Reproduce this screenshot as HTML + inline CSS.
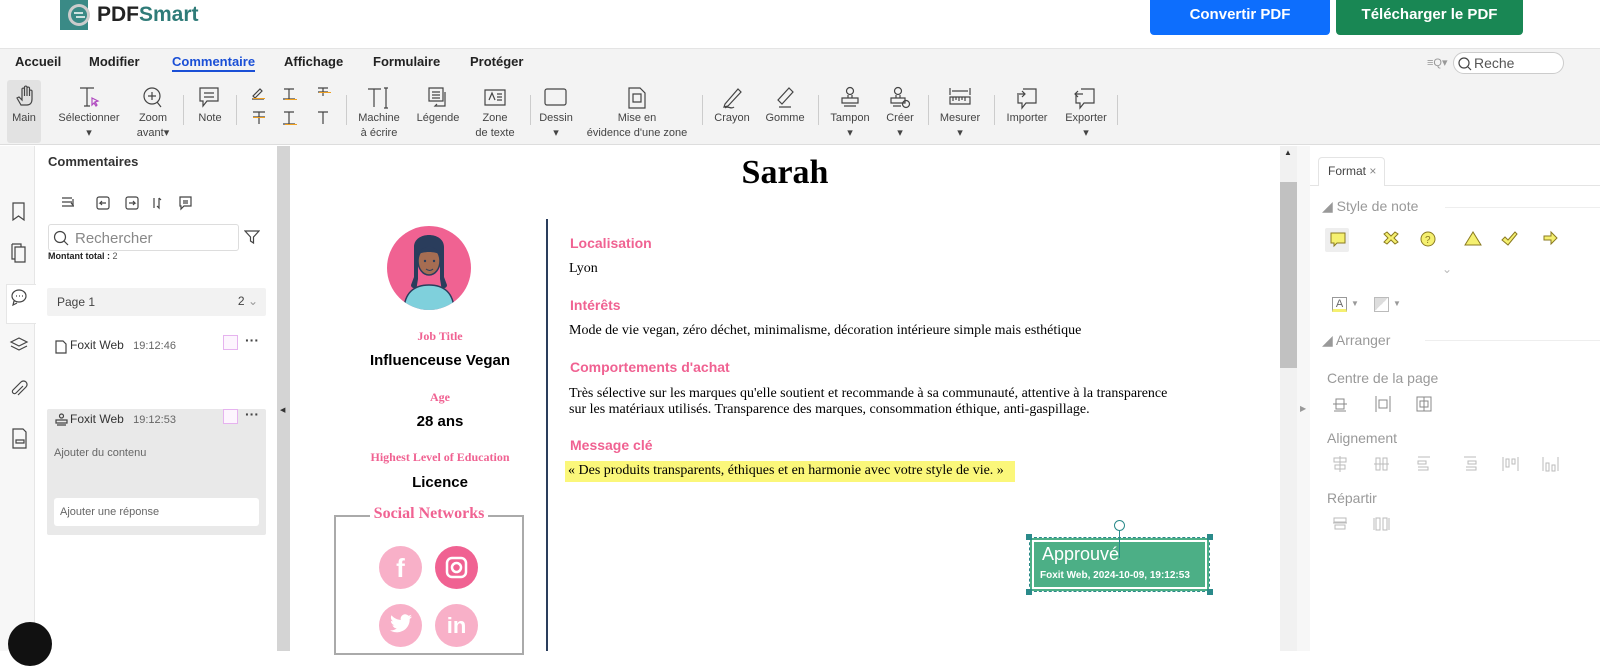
<!DOCTYPE html>
<html><head><meta charset="utf-8"><style>
*{margin:0;padding:0;box-sizing:border-box}
body{width:1600px;height:651px;overflow:hidden;background:#fff;font-family:"Liberation Sans",sans-serif;position:relative;color:#222}
.a{position:absolute}
.tb{font-size:11px;color:#444;text-align:center;line-height:15px}
.ic{position:absolute;stroke:#444;fill:none;stroke-width:1.2}
.ser{font-family:"Liberation Serif",serif}
.pk{color:#f06292;font-weight:bold;font-family:"Liberation Serif",serif}
.rp{color:#999;font-size:14px}
</style></head><body>
<!-- header -->
<svg class="a" style="left:58px;top:0" width="36" height="30"><path d="M2 0h28v30H2z" fill="#3a8a86"/><circle cx="21" cy="15" r="11" fill="#ccc"/><circle cx="21" cy="15" r="8" fill="#3a8a86"/><path d="M16 13h9M18 17h9" stroke="#fff" stroke-width="1.5"/></svg>
<div class="a" style="left:97px;top:3px;font-size:21px;font-weight:bold;color:#222">PDF<span style="color:#2f7b78">Smart</span></div>
<div class="a" style="left:1150px;top:0;width:180px;height:35px;background:#0d6efd;border-radius:0 0 4px 4px;color:#fff;font-weight:bold;font-size:15px;text-align:center;line-height:30px">Convertir PDF</div>
<div class="a" style="left:1336px;top:0;width:187px;height:35px;background:#198754;border-radius:0 0 4px 4px;color:#fff;font-weight:bold;font-size:15px;text-align:center;line-height:30px">Télécharger le PDF</div>
<!-- menubar -->
<div class="a" style="left:0;top:48px;width:1600px;height:97px;background:#f3f3f3;border-top:1px solid #e4e4e4;border-bottom:1px solid #ddd"></div>
<div class="a" style="top:54px;left:15px;font-size:13px;font-weight:bold;color:#222">Accueil</div>
<div class="a" style="top:54px;left:89px;font-size:13px;font-weight:bold">Modifier</div>
<div class="a" style="top:54px;left:172px;font-size:13px;font-weight:bold;color:#1a4fd6;border-bottom:2px solid #1a4fd6;padding-bottom:1px">Commentaire</div>
<div class="a" style="top:54px;left:284px;font-size:13px;font-weight:bold">Affichage</div>
<div class="a" style="top:54px;left:373px;font-size:13px;font-weight:bold">Formulaire</div>
<div class="a" style="top:54px;left:470px;font-size:13px;font-weight:bold">Protéger</div>
<div class="a" style="left:1427px;top:56px;font-size:11px;color:#999">≡Q▾</div>
<div class="a" style="left:1453px;top:52px;width:111px;height:22px;border:1px solid #ccc;border-radius:11px;background:#fff;font-size:14px;color:#555;padding:2px 0 0 20px">Reche</div>
<svg class="ic" style="left:1457px;top:56px" width="16" height="16"><circle cx="7" cy="7" r="5"/><path d="M11 11l3 3"/></svg>
<!-- toolbar -->
<div class="a" style="left:7px;top:80px;width:34px;height:63px;background:#e2e2e2;border-radius:3px"></div>
<svg class="ic" style="left:15px;top:85px" width="22" height="22"><path d="M6 20l-4-7 2-1 3 3V4a1.3 1.3 0 012.5 0v7V2a1.3 1.3 0 012.5 0v9V3a1.3 1.3 0 012.5 0v8V6a1.3 1.3 0 012.5 0v8c0 4-2 6-5 6z"/></svg>
<div class="a tb" style="left:7px;top:111px;width:34px">Main</div>
<svg class="ic" style="left:78px;top:86px" width="24" height="24"><path d="M2 2h14M9 2v18M6 20h6"/><path d="M14 12l6 3-3 1 2 3-1 1-2-3-2 2z" stroke="#b04ac0"/></svg>
<div class="a tb" style="left:52px;top:111px;width:74px">Sélectionner<br>▾</div>
<svg class="ic" style="left:141px;top:86px" width="24" height="24"><circle cx="11" cy="10" r="8"/><path d="M7 10h8M11 6v8M16 16l4 5"/></svg>
<div class="a tb" style="left:130px;top:111px;width:46px">Zoom<br>avant▾</div>
<div class="a" style="left:183px;top:95px;width:1px;height:30px;background:#ccc"></div>
<svg class="ic" style="left:198px;top:86px" width="24" height="24"><path d="M2 2h18v13H9l-4 5v-5H2z M6 7h10M6 11h10"/></svg>
<div class="a tb" style="left:190px;top:111px;width:40px">Note</div>
<div class="a" style="left:236px;top:95px;width:1px;height:30px;background:#ccc"></div>
<svg class="ic" style="left:250px;top:86px" width="90" height="48"><path d="M3 10l7-7 2 2-7 7zM2 13h12" /><path d="M34 3h10M39 3v10M33 13h12"/><path d="M68 2h10M73 2v8M68 6h10" /><path d="M3 31h12M9 26v12M3 26h12"/><path d="M34 26h10M39 26v12M33 38h12"/><path d="M68 26h10M73 26v12"/></svg>
<div class="a" style="left:253px;top:98px;width:12px;height:1px;background:#f0a020"></div>
<div class="a" style="left:285px;top:99px;width:12px;height:1px;background:#f0a020"></div>
<div class="a" style="left:319px;top:92px;width:12px;height:1px;background:#f0a020"></div>
<div class="a" style="left:253px;top:117px;width:12px;height:1px;background:#f0a020"></div>
<div class="a" style="left:285px;top:124px;width:12px;height:1px;background:#f0a020"></div>
<div class="a" style="left:346px;top:95px;width:1px;height:30px;background:#ccc"></div>
<svg class="ic" style="left:366px;top:86px" width="26" height="24"><path d="M2 3h13M8 3v18M20 2v20M18 2h4M18 22h4"/></svg>
<div class="a tb" style="left:352px;top:111px;width:54px">Machine<br>à écrire</div>
<svg class="ic" style="left:426px;top:86px" width="24" height="24"><path d="M3 2h14v13H3z M6 6h8M6 9h8M6 12h8M19 6v14h-10l2-2"/></svg>
<div class="a tb" style="left:412px;top:111px;width:52px">Légende</div>
<svg class="ic" style="left:483px;top:88px" width="24" height="20"><path d="M2 2h20v15H2z M6 12l3-7 3 7M14 6h5M14 9h5M14 12h5"/></svg>
<div class="a tb" style="left:470px;top:111px;width:50px">Zone<br>de texte</div>
<div class="a" style="left:530px;top:95px;width:1px;height:30px;background:#ccc"></div>
<svg class="ic" style="left:543px;top:87px" width="26" height="22"><rect x="2" y="2" width="21" height="16" rx="2"/></svg>
<div class="a tb" style="left:533px;top:111px;width:46px">Dessin<br>▾</div>
<svg class="ic" style="left:627px;top:86px" width="20" height="24"><path d="M2 2h11l5 5v15H2z M6 8h8v8H6z" /></svg>
<div class="a tb" style="left:585px;top:111px;width:104px">Mise en<br>évidence d'une zone</div>
<div class="a" style="left:702px;top:95px;width:1px;height:30px;background:#ccc"></div>
<svg class="ic" style="left:721px;top:86px" width="24" height="24"><path d="M4 18L17 3l3 3L7 20l-4 1zM4 22c3-3 6 2 9-1"/></svg>
<div class="a tb" style="left:708px;top:111px;width:48px">Crayon</div>
<svg class="ic" style="left:774px;top:86px" width="24" height="24"><path d="M8 18l11-12-4-4-11 12 4 4zM5 21h12"/></svg>
<div class="a tb" style="left:760px;top:111px;width:50px">Gomme</div>
<div class="a" style="left:818px;top:95px;width:1px;height:30px;background:#ccc"></div>
<svg class="ic" style="left:838px;top:86px" width="24" height="24"><circle cx="12" cy="5" r="3.5"/><path d="M10 9v3M14 9v3M4 12h16v5H4zM6 20h12"/></svg>
<div class="a tb" style="left:824px;top:111px;width:52px">Tampon<br>▾</div>
<svg class="ic" style="left:888px;top:86px" width="24" height="24"><circle cx="10" cy="5" r="3.5"/><path d="M8 9v3M12 9v3M3 12h14v5H3zM5 20h8"/><circle cx="18" cy="18" r="3.5"/></svg>
<div class="a tb" style="left:878px;top:111px;width:44px">Créer<br>▾</div>
<div class="a" style="left:928px;top:95px;width:1px;height:30px;background:#ccc"></div>
<svg class="ic" style="left:948px;top:86px" width="24" height="24"><path d="M2 2v7M22 2v7M4 5h16M2 11h20v7H2zM5 11v4M8 11v3M11 11v4M14 11v3M17 11v4"/></svg>
<div class="a tb" style="left:932px;top:111px;width:56px">Mesurer<br>▾</div>
<div class="a" style="left:994px;top:95px;width:1px;height:30px;background:#ccc"></div>
<svg class="ic" style="left:1015px;top:86px" width="24" height="24"><path d="M8 3h13v14H11l-4 5v-5H3V9M2 8h8M7 5l3 3-3 3"/></svg>
<div class="a tb" style="left:1000px;top:111px;width:54px">Importer</div>
<svg class="ic" style="left:1073px;top:86px" width="24" height="24"><path d="M8 3h13v14H11l-4 5v-5H3V9M10 8H2M5 5L2 8l3 3"/></svg>
<div class="a tb" style="left:1058px;top:111px;width:56px">Exporter<br>▾</div>
<div class="a" style="left:1117px;top:95px;width:1px;height:30px;background:#ccc"></div>
<!-- left strip -->
<div class="a" style="left:0;top:146px;width:35px;height:505px;background:#f7f7f7;border-right:1px solid #e6e6e6"></div>
<div class="a" style="left:6px;top:284px;width:30px;height:40px;background:#fff;border:1px solid #e6e6e6;border-right:none"></div>
<svg class="ic" style="left:9px;top:200px" width="20" height="250"><path d="M4 3h11v17l-5.5-4L4 20z"/><path d="M6 47h10v15H6zM3 44h9v3M3 44v15h3"/><path d="M3 96a7 6 0 1114 0 7 6 0 01-14 0zM7 96h1M10 96h1M13 96h1M5 101l-1 4 4-2"/><path d="M10 138l8 4-8 4-8-4zM2 146l8 4 8-4"/><path d="M14 186l-7 7a2 2 0 01-3-3l8-8a3.5 3.5 0 015 5l-8 8"/><path d="M4 229h10l3 3v16H4zM7 240h8v3H7z"/></svg>
<div class="a" style="left:8px;top:622px;width:44px;height:44px;border-radius:50%;background:#111"></div>
<!-- comments panel -->
<div class="a" style="left:48px;top:154px;font-size:13px;font-weight:bold;color:#333">Commentaires</div>
<svg class="ic" style="left:60px;top:195px" width="135" height="16" stroke-width="1"><path d="M2 3h10M2 7h10M2 11h12M13 4v6l-2-2"/><rect x="37" y="2" width="12" height="12" rx="2"/><path d="M46 8h-6l2-2M40 8l2 2"/><rect x="66" y="2" width="12" height="12" rx="2"/><path d="M69 8h6l-2-2M75 8l-2 2"/><path d="M94 3v10M99 3v10l-2-2M99 3l2 2"/><path d="M120 2h11v9h-7l-3 3v-3h-1zM123 6h5M123 8h5"/></svg>
<div class="a" style="left:48px;top:224px;width:191px;height:27px;border:1px solid #ddd;border-radius:3px;font-size:15px;color:#888;padding:5px 0 0 26px">Rechercher</div>
<svg class="ic" style="left:53px;top:230px" width="16" height="16"><circle cx="7" cy="7" r="5.5"/><path d="M11 11l4 4"/></svg>
<svg class="ic" style="left:244px;top:229px" width="16" height="16"><path d="M1 2h14l-5.5 6v6l-3-2V8z"/></svg>
<div class="a" style="left:48px;top:251px;font-size:9px;font-weight:bold;color:#222">Montant total : <span style="font-weight:normal;color:#555">2</span></div>
<div class="a" style="left:47px;top:288px;width:219px;height:28px;background:#f2f2f2;border-radius:2px;font-size:12px;color:#444;padding:7px 0 0 10px">Page 1<span style="position:absolute;right:8px;top:6px">2 <span style="color:#999">⌄</span></span></div>
<svg class="ic" style="left:55px;top:340px" width="12" height="14" stroke-width="1"><path d="M1 1h7l3 3v9H1z"/></svg>
<div class="a" style="left:70px;top:338px;font-size:12px;color:#333">Foxit Web <span style="color:#666;font-size:11px;margin-left:6px">19:12:46</span></div>
<div class="a" style="left:223px;top:335px;width:15px;height:15px;border:1px solid #e6b3ef;background:#fdf5fe"></div>
<div class="a" style="left:245px;top:332px;font-size:14px;color:#444;font-weight:bold">···</div>
<div class="a" style="left:47px;top:409px;width:219px;height:126px;background:#e9e9e9;border-radius:2px"></div>
<svg class="ic" style="left:55px;top:413px" width="13" height="14" stroke-width="1"><circle cx="6.5" cy="3" r="2"/><path d="M1 7h11v3H1zM2 12h9"/></svg>
<div class="a" style="left:70px;top:412px;font-size:12px;color:#333">Foxit Web <span style="color:#666;font-size:11px;margin-left:6px">19:12:53</span></div>
<div class="a" style="left:223px;top:409px;width:15px;height:15px;border:1px solid #e6b3ef;background:#fdf5fe"></div>
<div class="a" style="left:245px;top:406px;font-size:14px;color:#444;font-weight:bold">···</div>
<div class="a" style="left:54px;top:447px;font-size:11px;color:#666">Ajouter du contenu</div>
<div class="a" style="left:54px;top:498px;width:205px;height:28px;background:#fff;border-radius:3px;font-size:11px;color:#666;padding:8px 0 0 6px">Ajouter une réponse</div>
<!-- gutters -->
<div class="a" style="left:277px;top:146px;width:13px;height:505px;background:#d4d4d4"></div>
<div class="a" style="left:280px;top:406px;font-size:7px;color:#333">◀</div>
<div class="a" style="left:1280px;top:146px;width:17px;height:505px;background:#f1f1f1"></div>
<div class="a" style="left:1280px;top:182px;width:17px;height:186px;background:#c1c1c1"></div>
<div class="a" style="left:1284px;top:148px;font-size:8px;color:#333">▲</div>
<div class="a" style="left:1297px;top:146px;width:13px;height:505px;background:#f7f7f7"></div>
<div class="a" style="left:1300px;top:404px;font-size:8px;color:#999">▶</div>
<!-- document -->
<div class="a ser" style="left:290px;top:154px;width:990px;text-align:center;font-size:34px;font-weight:bold;color:#000">Sarah</div>
<div class="a" style="left:546px;top:219px;width:2px;height:432px;background:#2a3d5c"></div>
<svg class="a" style="left:386px;top:225px" width="86" height="86" viewBox="0 0 86 86"><defs><clipPath id="c"><circle cx="43" cy="43" r="42"/></clipPath></defs><circle cx="43" cy="43" r="42" fill="#f06292"/><g clip-path="url(#c)"><path d="M18 86c0-18 10-26 25-26s25 8 25 26z" fill="#7fd0dc" stroke="#2a3d5c" stroke-width="1.5"/><path d="M28 22c0-16 30-16 30 0v30l3 8c0 4-6 4-6 0l-1-6V34H32v20l-1 6c0 4-6 4-6 0l3-8z" fill="#2a3d5c"/><ellipse cx="43" cy="36" rx="11" ry="14" fill="#a66d52" stroke="#2a3d5c" stroke-width="1.5"/><path d="M31 30c3-10 21-10 24 0-6-4-18-4-24 0z" fill="#2a3d5c"/><circle cx="39" cy="36" r="1.2" fill="#2a3d5c"/><circle cx="48" cy="36" r="1.2" fill="#2a3d5c"/><path d="M40 44q4 3 7 0" stroke="#2a3d5c" fill="none"/></g></svg>
<div class="a pk" style="left:320px;top:329px;width:240px;text-align:center;font-size:12px">Job Title</div>
<div class="a" style="left:320px;top:352px;width:240px;text-align:center;font-size:15px;font-weight:bold;color:#000">Influenceuse Vegan</div>
<div class="a pk" style="left:320px;top:390px;width:240px;text-align:center;font-size:12px">Age</div>
<div class="a" style="left:320px;top:413px;width:240px;text-align:center;font-size:15px;font-weight:bold;color:#000">28 ans</div>
<div class="a pk" style="left:320px;top:450px;width:240px;text-align:center;font-size:12px">Highest Level of Education</div>
<div class="a" style="left:320px;top:474px;width:240px;text-align:center;font-size:15px;font-weight:bold;color:#000">Licence</div>
<div class="a" style="left:334px;top:515px;width:190px;height:140px;border:2px solid #aaa"></div>
<div class="a pk" style="left:370px;top:505px;width:118px;text-align:center;font-size:16px;background:#fff">Social Networks</div>
<div class="a" style="left:379px;top:546px;width:43px;height:43px;border-radius:50%;background:#f8b0c8;color:#fff;font-weight:bold;font-size:26px;text-align:center;line-height:44px">f</div>
<div class="a" style="left:435px;top:546px;width:43px;height:43px;border-radius:50%;background:#f06292"></div>
<svg class="a" style="left:445px;top:556px" width="23" height="23" fill="none" stroke="#fff" stroke-width="2.5"><rect x="2" y="2" width="19" height="19" rx="5"/><circle cx="11.5" cy="11.5" r="4.5"/></svg>
<div class="a" style="left:379px;top:604px;width:43px;height:43px;border-radius:50%;background:#f8b0c8"></div>
<svg class="a" style="left:389px;top:614px" width="24" height="20" viewBox="0 0 24 20"><path d="M23 2.5c-.8.4-1.7.6-2.6.7.9-.6 1.6-1.4 2-2.5-.9.5-1.9.9-2.9 1.1A4.5 4.5 0 0011.8 6C8 5.8 4.7 4 2.5 1.3c-1.2 2.1-.5 4.7 1.4 6-.7 0-1.4-.2-2-.6 0 2.2 1.5 4.1 3.6 4.5-.7.2-1.4.2-2 .1.6 1.8 2.3 3.1 4.2 3.1A9 9 0 011 16.3 12.8 12.8 0 0020.700 5.600V5c.9-.6 1.700-1.500 2.300-2.500z" fill="#fff"/></svg>
<div class="a" style="left:435px;top:604px;width:43px;height:43px;border-radius:50%;background:#f8b0c8;color:#fff;font-weight:bold;font-size:22px;text-align:center;line-height:44px">in</div>
<div class="a" style="left:570px;top:235px;font-size:14px;font-weight:bold;color:#f06292">Localisation</div>
<div class="a ser" style="left:569px;top:261px;font-size:14px;color:#000">Lyon</div>
<div class="a" style="left:570px;top:297px;font-size:14px;font-weight:bold;color:#f06292">Intérêts</div>
<div class="a ser" style="left:569px;top:323px;font-size:14px;color:#000">Mode de vie vegan, zéro déchet, minimalisme, décoration intérieure simple mais esthétique</div>
<div class="a" style="left:570px;top:359px;font-size:14px;font-weight:bold;color:#f06292">Comportements d'achat</div>
<div class="a ser" style="left:569px;top:386px;font-size:14px;color:#000;line-height:16px">Très sélective sur les marques qu'elle soutient et recommande à sa communauté, attentive à la transparence<br>sur les matériaux utilisés. Transparence des marques, consommation éthique, anti-gaspillage.</div>
<div class="a" style="left:570px;top:437px;font-size:14px;font-weight:bold;color:#f06292">Message clé</div>
<div class="a ser" style="left:565px;top:461px;width:450px;height:21px;background:#fbf77a;font-size:14px;color:#000;padding:2px 0 0 3px">« Des produits transparents, éthiques et en harmonie avec votre style de vie. »</div>
<div class="a" style="left:1029px;top:537px;width:181px;height:55px;border:1px dashed #2a8a8a"></div>
<div class="a" style="left:1032px;top:540px;width:175px;height:49px;background:#4caf86;border:2px solid #fff;outline:2px solid #4caf86"></div>
<div class="a" style="left:1042px;top:544px;font-size:18px;color:#fff">Approuvé</div>
<div class="a" style="left:1040px;top:570px;font-size:10px;font-weight:bold;color:#fff">Foxit Web, 2024-10-09, 19:12:53</div>
<div class="a" style="left:1119px;top:530px;width:1px;height:28px;background:#2a8a8a"></div>
<div class="a" style="left:1114px;top:520px;width:11px;height:11px;border:1.5px solid #2a8a8a;border-radius:50%;background:#fff"></div>
<div class="a" style="left:1026px;top:534px;width:6px;height:6px;background:#2a8a8a"></div>
<div class="a" style="left:1207px;top:534px;width:6px;height:6px;background:#2a8a8a"></div>
<div class="a" style="left:1026px;top:589px;width:6px;height:6px;background:#2a8a8a"></div>
<div class="a" style="left:1207px;top:589px;width:6px;height:6px;background:#2a8a8a"></div>
<!-- right panel -->
<div class="a" style="left:1310px;top:185px;width:290px;height:1px;background:#e4e4e4"></div>
<div class="a" style="left:1318px;top:157px;width:67px;height:29px;border:1px solid #e4e4e4;border-bottom:none;border-radius:4px 4px 0 0;background:#fff;font-size:12px;color:#444;padding:6px 0 0 9px">Format <span style="color:#888">×</span></div>
<div class="a" style="left:1322px;top:198px;font-size:14px;color:#999">◢ Style de note</div>
<div class="a" style="left:1445px;top:207px;width:155px;height:1px;background:#eee"></div>
<div class="a" style="left:1325px;top:228px;width:24px;height:24px;background:#eee;border-radius:2px"></div>
<svg class="a" style="left:1328px;top:230px" width="270" height="20" stroke="#8a7a20" stroke-width="1" fill="#f5f070"><path d="M3 3h14v10H9l-3 3v-3H3z"/><path d="M56 4l3-2 4 4 4-4 3 2-4 4 4 4-3 2-4-4-4 4-3-2 4-4z"/><circle cx="100" cy="9" r="7"/><text x="97" y="13" font-size="10" fill="#8a7a20" stroke="none" font-family="Liberation Sans">?</text><path d="M137 15l8-13 8 13z"/><path d="M174 10l3-3 3 3 7-8 2 2-9 11z"/><path d="M216 6h7V2l6 6-6 6v-4h-7z"/></svg>
<div class="a" style="left:1442px;top:262px;font-size:12px;color:#bbb">⌄</div>
<div class="a" style="left:1332px;top:297px;width:15px;height:15px;border:1px solid #999;font-size:11px;color:#666;text-align:center;line-height:13px;border-bottom:3px solid #f5f070">A</div>
<div class="a" style="left:1351px;top:299px;font-size:8px;color:#999">▼</div>
<div class="a" style="left:1374px;top:297px;width:15px;height:15px;border:1px solid #bbb;background:linear-gradient(135deg,#ddd 50%,#fff 50%)"></div>
<div class="a" style="left:1393px;top:299px;font-size:8px;color:#999">▼</div>
<div class="a" style="left:1322px;top:332px;font-size:14px;color:#999">◢ Arranger</div>
<div class="a" style="left:1425px;top:340px;width:175px;height:1px;background:#eee"></div>
<div class="a rp" style="left:1327px;top:370px">Centre de la page</div>
<svg class="a" style="left:1332px;top:395px" width="110" height="20" stroke="#888" fill="none" stroke-width="1"><path d="M1 9h14M4 4h8v10H4zM2 16h12"/><path d="M44 1v16M58 1v16M47 5h8v8h-8z"/><path d="M85 2h14v14H85zM88 6h8v6h-8zM92 2v14"/></svg>
<div class="a rp" style="left:1327px;top:430px">Alignement</div>
<svg class="a" style="left:1332px;top:455px" width="230" height="20" stroke="#bbb" fill="none" stroke-width="1"><path d="M2 3h12v4H2zM3 10h10v4H3zM8 1v16"/><path d="M44 3h4v12h-4zM51 3h4v12h-4zM42 9h15"/><path d="M86 2h12M86 6h8v3h-8zM86 12h10v3H86"/><path d="M132 2h12M136 6h8v3h-8zM134 12h10v3h-10"/><path d="M171 2v14M174 4h3v8h-3zM180 4h3v5h-3zM186 2v14"/><path d="M211 2v14M214 8h3v8h-3zM220 10h3v6h-3zM226 2v14"/></svg>
<div class="a rp" style="left:1327px;top:490px">Répartir</div>
<svg class="a" style="left:1332px;top:515px" width="60" height="20" stroke="#bbb" fill="none" stroke-width="1"><path d="M2 3h12v4H2zM3 10h10v4H3zM1 8h14"/><path d="M44 3h4v12h-4zM51 3h4v12h-4zM42 3v12M57 3v12"/></svg>
</body></html>
